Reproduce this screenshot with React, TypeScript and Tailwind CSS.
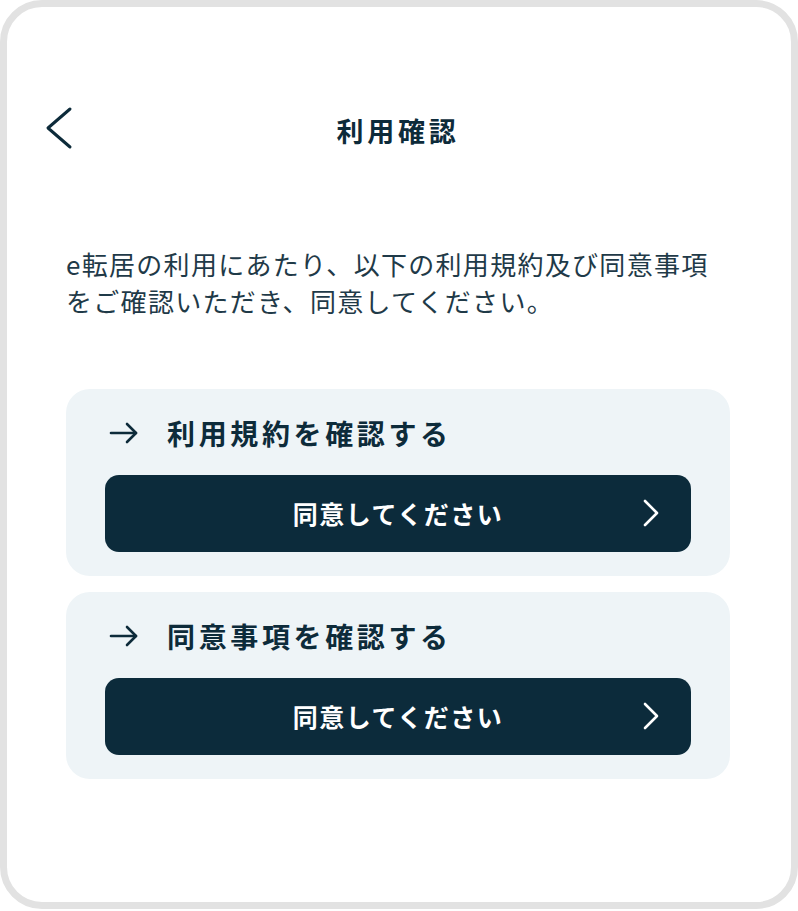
const FONT = { fontFamily: '"Noto Sans CJK JP", "Noto Sans", sans-serif' }

function BackChevron() {
  return (
    <svg width="30" height="44" viewBox="0 0 30 44" fill="none" stroke="currentColor" strokeWidth="3" strokeLinecap="round" strokeLinejoin="round">
      <polyline points="26,3 4,22 26,41" />
    </svg>
  )
}

function NextChevron() {
  return (
    <svg width="20" height="30" viewBox="0 0 20 30" fill="none" stroke="currentColor" strokeWidth="2.6" strokeLinecap="round" strokeLinejoin="round">
      <polyline points="4,3 16,15 4,27" />
    </svg>
  )
}

function LinkArrow() {
  return (
    <svg width="30" height="24" viewBox="0 0 30 24" fill="none" stroke="currentColor" strokeWidth="2.6" strokeLinecap="round" strokeLinejoin="round">
      <line x1="2" y1="12" x2="27" y2="12" />
      <polyline points="18,3 27,12 18,21" />
    </svg>
  )
}

function ConsentCard({ label }: { label: string }) {
  return (
    <section className="rounded-[24px] bg-[#eef4f7] px-[39px] pt-[24px] pb-[24px]">
      <div className="flex items-center h-[40px] pl-[4px] text-[#0d2b3a]">
        <LinkArrow />
        <span className="ml-[28px] text-[28px] font-bold tracking-[0.13em] leading-none">{label}</span>
      </div>
      <button className="mt-[22px] w-full h-[77px] rounded-[14px] bg-[#0c2b3b] text-white flex items-center relative">
        <span className="flex-1 text-center text-[25px] font-bold tracking-[0.06em] leading-none">同意してください</span>
        <span className="absolute right-[30px] top-[23px]">
          <NextChevron />
        </span>
      </button>
    </section>
  )
}

export default function App() {
  return (
    <div className="w-[798px] h-[911px] bg-white" style={FONT}>
      <div className="w-[798px] h-[909px] border-[7px] border-[#e2e2e2] rounded-[42px] bg-white pt-[93px] pl-[59px] pr-[61px]">
        <header className="relative h-[60px] flex items-center justify-center text-[#0d2b3a]">
          <span className="absolute left-[-22px] top-[6px]">
            <BackChevron />
          </span>
          <h1 className="text-[27px] font-bold tracking-[0.14em] leading-none">利用確認</h1>
        </header>
        <p className="mt-[85px] text-[26px] leading-[37px] tracking-[0.05em] text-[#1f3a48]">
          e転居の利用にあたり、以下の利用規約及び同意事項をご確認いただき、同意してください。
        </p>
        <div className="mt-[70px] flex flex-col gap-[16px]">
          <ConsentCard label="利用規約を確認する" />
          <ConsentCard label="同意事項を確認する" />
        </div>
      </div>
    </div>
  )
}
